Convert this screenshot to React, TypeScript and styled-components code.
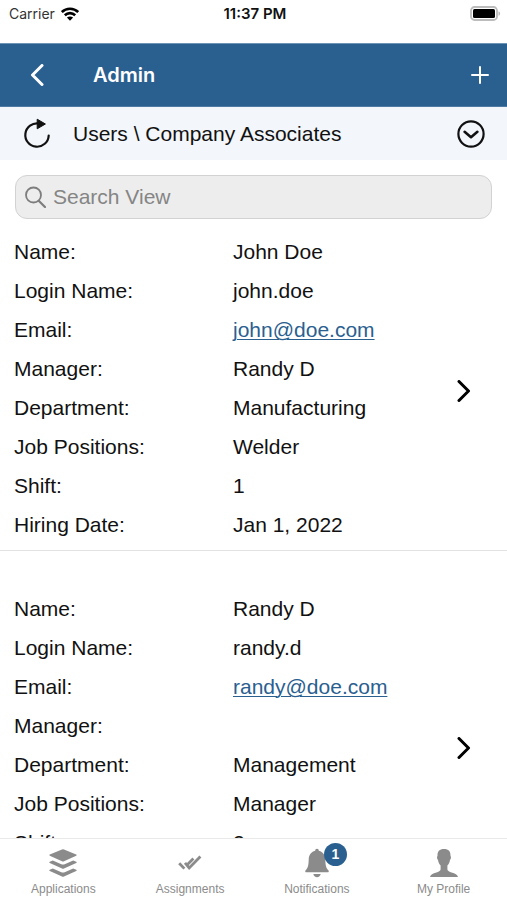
import React from "react";
import styled, { createGlobalStyle } from "styled-components";

const BLUE = "#2a6090";
const GREY = "#8b8b8b";
const SYSTEM_FONT = `Inter, "Liberation Sans", sans-serif`;

const GlobalStyle = createGlobalStyle`
  * { box-sizing: border-box; }
  body {
    margin: 0;
    background: #fff;
    color: #111;
    font-family: "Liberation Sans", Arial, sans-serif;
  }
`;

const Screen = styled.div`
  display: flex;
  flex-direction: column;
  height: 100vh;
  overflow: hidden;
`;

const StatusBar = styled.div`
  display: grid;
  grid-template-columns: 1fr auto 1fr;
  align-items: center;
  flex: none;
  height: 43px;
  padding: 0 6px 16px 9px;
  font-family: ${SYSTEM_FONT};
  font-size: 14px;
  line-height: 18px;
`;

const Carrier = styled.div`
  display: flex;
  align-items: center;
  gap: 6px;
  color: #333;
`;

const Clock = styled.time`
  font-size: 15px;
  font-weight: 600;
`;

const Battery = styled.div`
  display: flex;
  justify-content: flex-end;
`;

const IconButton = styled.button`
  display: flex;
  align-items: center;
  justify-content: center;
  flex: none;
  width: 32px;
  height: 40px;
  padding: 0;
  border: 0;
  background: none;
  color: inherit;
  cursor: pointer;
`;

const Header = styled.header`
  display: flex;
  align-items: center;
  flex: none;
  height: 64px;
  padding: 0 11px 0 21px;
  border-top: 1px solid #6d93b5;
  border-bottom: 1px solid #4d7ba3;
  background: ${BLUE};
  color: #fff;
`;

const Title = styled.h1`
  flex: 1;
  margin: 0 0 0 40px;
  font-family: ${SYSTEM_FONT};
  font-size: 20px;
  font-weight: 600;
  line-height: 24px;
`;

const Breadcrumb = styled.nav`
  display: flex;
  align-items: center;
  flex: none;
  height: 53px;
  padding: 0 20px 0 21px;
  background: #f3f6fa;
`;

const Crumbs = styled.h2`
  flex: 1;
  margin: 0 0 0 20px;
  font-size: 21px;
  font-weight: 400;
  line-height: 24px;
`;

const SearchBox = styled.label`
  display: flex;
  align-items: center;
  gap: 7px;
  flex: none;
  height: 44px;
  margin: 15px 15px 13px;
  padding: 0 9px;
  border: 1px solid #d2d2d2;
  border-radius: 12px;
  background: #ededed;
  color: #7d7d7d;
`;

const SearchInput = styled.input`
  flex: 1;
  min-width: 0;
  padding: 0;
  border: 0;
  outline: 0;
  background: none;
  color: #111;
  font: inherit;
  font-size: 21px;
  line-height: 24px;
  &::placeholder {
    color: #858585;
    opacity: 1;
  }
`;

const List = styled.main`
  flex: 1;
  min-height: 0;
  overflow: hidden auto;
  scrollbar-width: none;
`;

const Record = styled.article`
  display: flex;
  align-items: center;
  padding: 0 27px 0 14px;
  border-bottom: 1px solid #e2e2e2;
  & + & {
    margin-top: 38px;
  }
`;

const Fields = styled.dl`
  flex: 1;
  margin: 0;
  padding-bottom: 6px;
  font-size: 21px;
  line-height: 39px;
`;

const Field = styled.div`
  display: grid;
  grid-template-columns: 1fr 1fr;
  column-gap: 4px;
  height: 39px;
`;

const Label = styled.dt`
  white-space: nowrap;
`;

const Value = styled.dd`
  margin: 0;
  white-space: nowrap;
`;

const MailLink = styled.a`
  color: ${BLUE};
  text-decoration: underline;
  text-decoration-thickness: 1px;
  text-underline-offset: 2px;
`;

const TabBar = styled.nav`
  display: grid;
  grid-template-columns: repeat(4, 1fr);
  flex: none;
  height: 62px;
  border-top: 1px solid #e9e9e9;
  background: #fff;
`;

const Tab = styled.button`
  display: flex;
  flex-direction: column;
  align-items: center;
  gap: 3px;
  padding: 9px 0 0;
  border: 0;
  background: none;
  color: ${GREY};
  font: inherit;
  font-size: 12px;
  line-height: 16px;
  cursor: pointer;
`;

const TabIcon = styled.span`
  position: relative;
  display: flex;
  align-items: center;
  justify-content: center;
  width: 30px;
  height: 30px;
`;

const Badge = styled.span`
  position: absolute;
  top: -5px;
  left: 22px;
  width: 23px;
  height: 23px;
  border-radius: 50%;
  background: ${BLUE};
  color: #fff;
  font-size: 14px;
  font-weight: 700;
  line-height: 23px;
  text-align: center;
`;

const WifiIcon = () => (
  <svg width="18" height="14" viewBox="0 0 18 14" aria-hidden="true">
    <g fill="none" stroke="#000" strokeWidth="2.6">
      <path d="M.8 5.100C5.300.6 12.700.6 17.200 5.100" />
      <path d="M3.800 8.300c3-2.900 7.400-2.900 10.400 0" />
    </g>
    <path d="M9 13.800 5.900 10.600c1.800-1.600 4.400-1.600 6.200 0z" fill="#000" />
  </svg>
);

const BatteryIcon = () => (
  <svg width="31" height="15" viewBox="0 0 31 15" role="img" aria-label="Battery full">
    <rect x="1" y="1" width="26" height="13" rx="3.500" fill="#fff" stroke="#bcbcbc" strokeWidth="1.800" />
    <rect x="3" y="3" width="22" height="9" rx="1.500" fill="#000" />
    <path d="M28.500 5.200c2.200 1 2.200 3.600 0 4.600z" fill="#bcbcbc" />
  </svg>
);

const BackIcon = () => (
  <svg width="14" height="22" viewBox="0 0 14 22" aria-hidden="true">
    <path d="M12 1.500 2.500 11l9.500 9.500" fill="none" stroke="currentColor" strokeWidth="3" strokeLinecap="round" strokeLinejoin="round" />
  </svg>
);

const PlusIcon = () => (
  <svg width="18" height="18" viewBox="0 0 18 18" aria-hidden="true">
    <path d="M9 1v16M1 9h16" stroke="currentColor" strokeWidth="2" strokeLinecap="round" />
  </svg>
);

const RefreshIcon = () => (
  <svg width="28" height="32" viewBox="0 0 28 32" aria-hidden="true">
    <path d="M16 5.500A11.700 11.700 0 1 0 25.700 17.500" fill="none" stroke="#111" strokeWidth="2.200" strokeLinecap="round" />
    <path d="M14.200 1.200v9.600L22.400 6z" fill="#111" stroke="#111" strokeLinejoin="round" />
  </svg>
);

const ExpandIcon = () => (
  <svg width="28" height="28" viewBox="0 0 28 28" aria-hidden="true">
    <circle cx="14" cy="14" r="12.600" fill="none" stroke="#111" strokeWidth="2.200" />
    <path d="m7.600 11.800 6.400 5.400 6.400-5.400" fill="none" stroke="#111" strokeWidth="2.600" strokeLinecap="round" strokeLinejoin="round" />
  </svg>
);

const SearchIcon = () => (
  <svg width="21" height="22" viewBox="0 0 21 22" aria-hidden="true">
    <g fill="none" stroke="currentColor" strokeLinecap="round">
      <circle cx="8.500" cy="9" r="7.500" strokeWidth="1.800" />
      <path d="m14 15 6 6" strokeWidth="2.200" />
    </g>
  </svg>
);

const ChevronIcon = () => (
  <svg width="14" height="22" viewBox="0 0 14 22" aria-hidden="true">
    <path d="m2 1.500 9.500 9.500L2 20.500" fill="none" stroke="#000" strokeWidth="3" strokeLinecap="round" strokeLinejoin="round" />
  </svg>
);

const LayersIcon = () => (
  <svg width="28" height="28" viewBox="0 0 28 28" fill="currentColor" aria-hidden="true">
    <path d="M13 .4q1-.4 2 0l12.200 5.100q1 .6 0 1.200L15 12.200q-1 .4-2 0L.8 6.700q-1-.6 0-1.200z" />
    <path d="m.8 12.800 3-1.400 8.500 3.800q1.700.7 3.400 0l8.500-3.800 3 1.400q1 .6 0 1.200L15 19.500q-1 .4-2 0L.8 14q-1-.6 0-1.200z" />
    <path d="m.8 20.800 3-1.400 8.500 3.800q1.700.7 3.400 0l8.500-3.800 3 1.400q1 .6 0 1.200L15 27.500q-1 .4-2 0L.8 22q-1-.6 0-1.200z" />
  </svg>
);

const ChecksIcon = () => (
  <svg width="24" height="16" viewBox="0 0 24 16" aria-hidden="true">
    <g fill="none" stroke="currentColor" strokeWidth="2.800" strokeLinejoin="miter">
      <path d="m1.200 8.200 5.200 5.400" />
      <path d="m7 7.800 4.200 5.200L22.400 1.500" />
      <path d="m9 10 6.400-6.400" />
    </g>
  </svg>
);

const BellIcon = () => (
  <svg width="24" height="30" viewBox="0 0 24 30" fill="currentColor" aria-hidden="true">
    <path d="M12 .8c1.200 0 1.800.8 1.800 2 4.500 1.200 6.300 4.500 6.500 9 .2 5.500.7 8.500 3.200 10.700.6.700.2 1.700-.7 1.700H1.200c-.9 0-1.300-1-.7-1.700C3 20.300 3.500 17.300 3.700 11.800c.2-4.500 2-7.800 6.500-9 0-1.200.6-2 1.800-2z" />
    <path d="M8.300 26h7.400c-.4 2-1.800 3.200-3.700 3.200S8.700 28 8.300 26z" />
  </svg>
);

const PersonIcon = () => (
  <svg width="28" height="28" viewBox="0 0 28 28" fill="currentColor" aria-hidden="true">
    <path d="M14 0c4.500 0 6.800 2.600 6.500 7 .8.500.6 3-.5 3.900-.4 2.400-1.300 4.300-2.600 5.500v4.200c.3 1.800 2 2.200 4.200 2.900 3.500 1 6 2 6.400 4.500H0c.4-2.500 2.900-3.500 6.400-4.500 2.200-.7 3.900-1.100 4.200-2.900v-4.200C9.300 15.200 8.400 13.300 8 10.900c-1.100-.9-1.300-3.400-.5-3.900C7.200 2.600 9.500 0 14 0z" />
  </svg>
);

interface User {
  name: string;
  login: string;
  email: string;
  manager: string;
  department: string;
  position: string;
  shift: string;
  hired: string;
}

const users: User[] = [
  { name: "John Doe", login: "john.doe", email: "john@doe.com", manager: "Randy D", department: "Manufacturing", position: "Welder", shift: "1", hired: "Jan 1, 2022" },
  { name: "Randy D", login: "randy.d", email: "randy@doe.com", manager: "", department: "Management", position: "Manager", shift: "2", hired: "" },
];

const tabs = [
  { label: "Applications", icon: <LayersIcon /> },
  { label: "Assignments", icon: <ChecksIcon /> },
  { label: "Notifications", icon: <BellIcon />, count: 1 },
  { label: "My Profile", icon: <PersonIcon /> },
];

function UserRecord({ user }: { user: User }) {
  const fields: [string, React.ReactNode][] = [
    ["Name:", user.name],
    ["Login Name:", user.login],
    ["Email:", <MailLink href={`mailto:${user.email}`}>{user.email}</MailLink>],
    ["Manager:", user.manager],
    ["Department:", user.department],
    ["Job Positions:", user.position],
    ["Shift:", user.shift],
    ["Hiring Date:", user.hired],
  ];
  return (
    <Record>
      <Fields>
        {fields.map(([label, value]) => (
          <Field key={label}>
            <Label>{label}</Label>
            <Value>{value}</Value>
          </Field>
        ))}
      </Fields>
      <IconButton aria-label={`Open ${user.name}`}>
        <ChevronIcon />
      </IconButton>
    </Record>
  );
}

export default function App() {
  return (
    <Screen>
      <GlobalStyle />
      <StatusBar>
        <Carrier>
          Carrier <WifiIcon />
        </Carrier>
        <Clock>11:37 PM</Clock>
        <Battery>
          <BatteryIcon />
        </Battery>
      </StatusBar>
      <Header>
        <IconButton aria-label="Back">
          <BackIcon />
        </IconButton>
        <Title>Admin</Title>
        <IconButton aria-label="Add">
          <PlusIcon />
        </IconButton>
      </Header>
      <Breadcrumb aria-label="Breadcrumb">
        <IconButton aria-label="Refresh">
          <RefreshIcon />
        </IconButton>
        <Crumbs>Users \ Company Associates</Crumbs>
        <IconButton aria-label="Expand">
          <ExpandIcon />
        </IconButton>
      </Breadcrumb>
      <SearchBox>
        <SearchIcon />
        <SearchInput type="text" placeholder="Search View" aria-label="Search View" />
      </SearchBox>
      <List>
        {users.map((user) => (
          <UserRecord key={user.login} user={user} />
        ))}
      </List>
      <TabBar aria-label="Main">
        {tabs.map((tab) => (
          <Tab key={tab.label}>
            <TabIcon>
              {tab.icon}
              {tab.count && <Badge>{tab.count}</Badge>}
            </TabIcon>
            {tab.label}
          </Tab>
        ))}
      </TabBar>
    </Screen>
  );
}
